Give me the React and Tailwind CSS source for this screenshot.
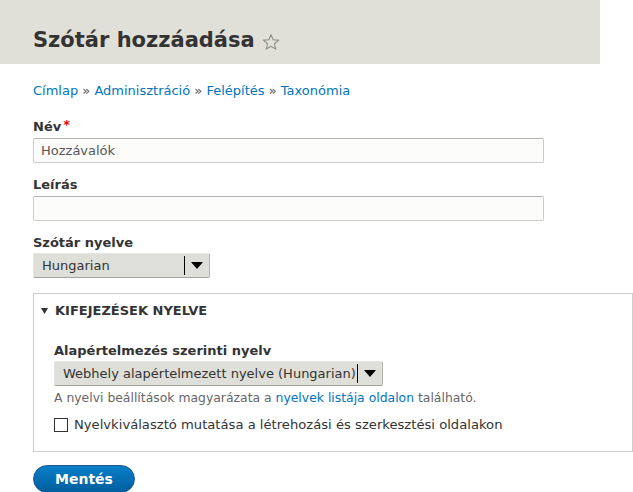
import React from "react";

function Star() {
  return (
    <svg width="18" height="18" viewBox="0 0 24 24" className="ml-[7px] mt-[3px]">
      <path d="M12 2.5l2.9 6.6 7.1.6-5.4 4.7 1.6 7-6.2-3.7-6.2 3.7 1.6-7L2 9.7l7.1-.6z" fill="none" stroke="#8a8a80" strokeWidth="1.35" strokeLinejoin="miter" />
    </svg>
  );
}

function Select({ children, width }) {
  return (
    <div className={`flex items-center h-[25px] bg-[#dfdfd9] border border-[#e4e4e0] border-b-[#a4a49e] border-r-[#b4b4ae] rounded-[2px] ${width}`}>
      <span className="flex-1 pl-[8px] text-[13px] text-[#333] whitespace-nowrap">{children}</span>
      <span className="w-px h-[19px] bg-black" />
      <span className="w-[24px] flex justify-center">
        <svg width="12" height="7" viewBox="0 0 12 7"><path d="M0 0h12L6 7z" fill="#000" /></svg>
      </span>
    </div>
  );
}

export default function App() {
  return (
    <div className="w-[633px] h-[492px] bg-white overflow-hidden text-[#333]" style={{ fontFamily: '"DejaVu Sans", sans-serif' }}>
      <div className="w-[600px] h-[64px] bg-[#e0e0d8] flex items-end pl-[33px] pb-[9px]">
        <h1 className="text-[21px] font-bold text-[#333] leading-[30px] flex items-center">
          Szótár hozzáadása
          <Star />
        </h1>
      </div>
      <div className="px-[33px]">
        <div className="mt-[18px] text-[13px] leading-[18px] text-[#0074bd]">
          Címlap <span className="text-[#555]">»</span> Adminisztráció <span className="text-[#555]">»</span> Felépítés <span className="text-[#555]">»</span> Taxonómia
        </div>

        <div className="mt-[18px]">
          <div className="text-[13px] font-bold leading-[18px] flex">
            Név<span className="text-[#e00] ml-[2px] -mt-[2px]">*</span>
          </div>
          <div className="mt-[2px] w-[511px] h-[25px] bg-[#fcfcfa] border border-[#ccc] border-t-[#b4b4b4] rounded-[2px] flex items-center pl-[7px] text-[13px] text-[#555]">
            Hozzávalók
          </div>
        </div>

        <div className="mt-[13px]">
          <div className="text-[13px] font-bold leading-[18px]">Leírás</div>
          <div className="mt-[2px] w-[511px] h-[25px] bg-[#fcfcfa] border border-[#ccc] border-t-[#b4b4b4] rounded-[2px]" />
        </div>

        <div className="mt-[13px]">
          <div className="text-[13px] font-bold leading-[18px]">Szótár nyelve</div>
          <div className="mt-[1px]">
            <Select width="w-[177px]">Hungarian</Select>
          </div>
        </div>

        <div className="mt-[15px] w-[600px] h-[159px] border border-[#ccc] pt-[8px] pl-[7px]">
          <div className="flex items-center text-[13px] font-bold leading-[18px] uppercase text-[#333]">
            <svg width="7" height="6" viewBox="0 0 7 6" className="mr-[7px]"><path d="M0 0h7L3.5 6z" fill="#333" /></svg>
            Kifejezések nyelve
          </div>
          <div className="pl-[13px] mt-[22px]">
            <div className="text-[13px] font-bold leading-[18px]">Alapértelmezés szerinti nyelv</div>
            <div className="mt-[1px]">
              <Select width="w-[329px]">Webhely alapértelmezett nyelve (Hungarian)</Select>
            </div>
            <div className="mt-[3px] text-[12.4px] leading-[18px] text-[#666]">
              A nyelvi beállítások magyarázata a <span className="text-[#0074bd]">nyelvek listája oldalon</span> található.
            </div>
            <div className="mt-[9px] flex items-center">
              <span className="w-[14px] h-[14px] border border-[#333] bg-white" />
              <span className="ml-[6px] text-[13.15px] leading-[18px] text-[#333]">Nyelvkiválasztó mutatása a létrehozási és szerkesztési oldalakon</span>
            </div>
          </div>
        </div>

        <div className="mt-[13px] w-[102px] h-[28px] rounded-[20px] bg-gradient-to-b from-[#0a7fc8] to-[#005e9e] border border-[#1e5c90] flex items-center justify-center text-white text-[14px] font-bold">
          Mentés
        </div>
      </div>
    </div>
  );
}
